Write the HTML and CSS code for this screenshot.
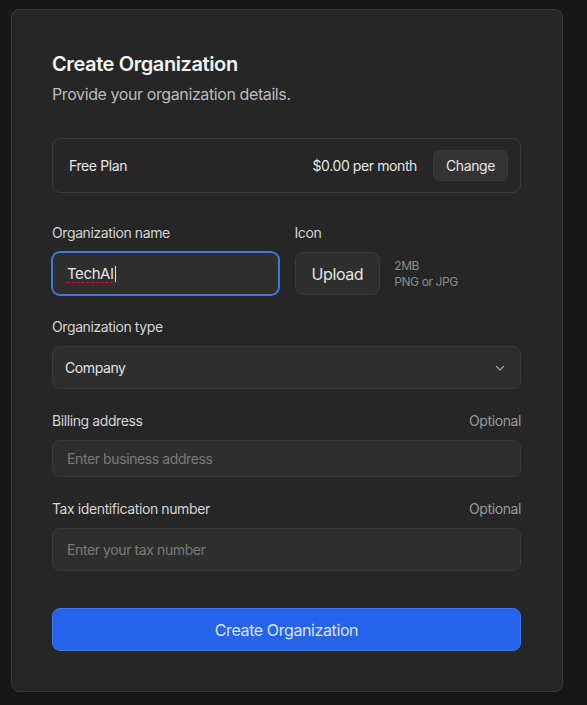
FILE: index.html
```html
<!DOCTYPE html>
<html lang="en">
<head>
<meta charset="utf-8">
<title>Create Organization</title>
<link rel="stylesheet" href="styles.css">
</head>
<body>
  <div class="card">
    <h1 class="title">Create Organization</h1>
    <p class="subtitle">Provide your organization details.</p>

    <div class="plan">
      <span class="plan-name">Free Plan</span>
      <div class="plan-right">
        <span class="plan-price">$0.00 per month</span>
        <button class="btn-secondary">Change</button>
      </div>
    </div>

    <div class="row-two">
      <div class="field">
        <div class="label-row"><span class="label">Organization name</span></div>
        <div class="input input-focus"><span class="typed">TechAI</span><span class="caret"></span></div>
      </div>
      <div class="field">
        <div class="label-row"><span class="label">Icon</span></div>
        <div class="upload-row">
          <button class="btn-upload">Upload</button>
          <div class="upload-hint">
            <span>2MB</span>
            <span>PNG or JPG</span>
          </div>
        </div>
      </div>
    </div>

    <div class="field group">
      <div class="label-row"><span class="label">Organization type</span></div>
      <div class="input select">
        <span class="value">Company</span>
        <svg class="chevron" width="12" height="12" viewBox="0 0 12 12" fill="none"><path d="M2.5 4.5 L6 8 L9.5 4.5" stroke="#9a9a9a" stroke-width="1.3" stroke-linecap="round" stroke-linejoin="round"/></svg>
      </div>
    </div>

    <div class="field group">
      <div class="label-row"><span class="label">Billing address</span><span class="optional">Optional</span></div>
      <div class="input input-short"><span class="placeholder">Enter business address</span></div>
    </div>

    <div class="field group">
      <div class="label-row"><span class="label">Tax identification number</span><span class="optional">Optional</span></div>
      <div class="input"><span class="placeholder">Enter your tax number</span></div>
    </div>

    <button class="btn-primary">Create Organization</button>
  </div>
</body>
</html>
```

FILE: styles.css
```css
* { box-sizing: border-box; }

html, body {
  margin: 0;
  background: #171717;
}

body {
  padding: 9px 11px;
  font-family: Inter, "Liberation Sans", sans-serif;
  letter-spacing: -0.025em;
  color: #e5e5e5;
}

.card {
  width: 552px;
  background: #262626;
  border: 1px solid #3a3a3a;
  border-radius: 8px;
  padding: 40px 41px 40px 40px;
  display: flex;
  flex-direction: column;
}

.title {
  margin: 0;
  font-size: 20px;
  line-height: 28px;
  font-weight: 600;
  color: #f5f5f5;
}

.subtitle {
  margin: 4px 0 0;
  font-size: 16px;
  line-height: 24px;
  color: #bcbcbc;
}

.plan {
  margin-top: 32px;
  border: 1px solid #3a3a3a;
  border-radius: 8px;
  padding: 11px 12px 11px 16px;
  display: flex;
  align-items: center;
  justify-content: space-between;
}

.plan-name {
  font-size: 14px;
  color: #e5e5e5;
}

.plan-right {
  display: flex;
  align-items: center;
  gap: 16px;
}

.plan-price {
  font-size: 14px;
  color: #e5e5e5;
}

.btn-secondary {
  height: 31px;
  padding: 0 12px;
  background: #333333;
  border: 1px solid #3a3a3a;
  border-radius: 6px;
  color: #e5e5e5;
  font-family: inherit;
  letter-spacing: inherit;
  font-size: 14px;
}

.row-two {
  margin-top: 30px;
  display: grid;
  grid-template-columns: 1fr 1fr;
  gap: 16px;
}

.field {
  display: flex;
  flex-direction: column;
  gap: 9px;
}

.group {
  margin-top: 22px;
}

.label-row {
  display: flex;
  justify-content: space-between;
  align-items: center;
  height: 20px;
}

.label {
  font-size: 14px;
  line-height: 20px;
  color: #d4d4d4;
}

.optional {
  font-size: 14px;
  line-height: 20px;
  color: #9a9a9a;
}

.input {
  height: 43px;
  background: #2e2e2e;
  border: 1px solid #3a3a3a;
  border-radius: 8px;
  padding: 0 14px;
  display: flex;
  align-items: center;
  font-size: 15px;
  color: #e5e5e5;
}

.input-short {
  height: 37px;
}

.input-focus {
  border-color: #3b7be0;
  box-shadow: 0 0 0 1px #3b7be0;
}

.typed {
  text-decoration: underline dashed #d11a1a;
  text-underline-offset: 3px;
  text-decoration-thickness: 1px;
}

.caret {
  width: 1px;
  height: 16px;
  background: #e5e5e5;
  margin-left: 1px;
}

.placeholder {
  color: #7a7a7a;
  font-size: 14px;
}

.select {
  padding: 0 14px 0 12px;
  justify-content: space-between;
}

.value {
  font-size: 14px;
  color: #e5e5e5;
}

.upload-row {
  display: flex;
  align-items: center;
  gap: 14px;
}

.btn-upload {
  height: 43px;
  padding: 0 16px;
  background: #2e2e2e;
  border: 1px solid #3a3a3a;
  border-radius: 8px;
  color: #e5e5e5;
  font-family: inherit;
  letter-spacing: inherit;
  font-size: 16px;
}

.upload-hint {
  display: flex;
  flex-direction: column;
  font-size: 12px;
  line-height: 16px;
  color: #8c8c8c;
}

.btn-primary {
  margin-top: 37px;
  height: 43px;
  background: #2563eb;
  border: 1px solid #3b76f0;
  border-radius: 8px;
  color: #dbe5ff;
  font-family: inherit;
  letter-spacing: inherit;
  font-size: 16px;
}
```
